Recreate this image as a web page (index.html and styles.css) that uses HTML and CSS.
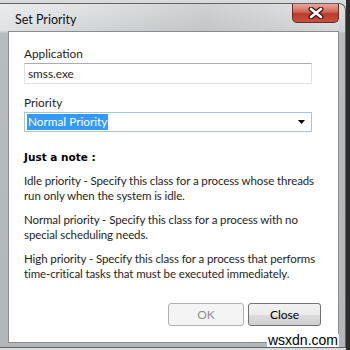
FILE: index.html
```html
<!DOCTYPE html>
<html lang="en">
<head>
  <meta charset="UTF-8" />
  <title>Set Priority</title>
  <link rel="stylesheet" href="styles.css">
</head>
<body>
  <div class="window">
    <div class="titlebar">
      <span class="title">Set Priority</span>
      <button class="close-x" aria-label="Close">
        <svg width="16" height="12" viewBox="0 0 16 12">
          <path d="M3 2 L13 10 M13 2 L3 10" stroke="#3a1a14" stroke-width="5" stroke-linecap="round" />
          <path d="M3 2 L13 10 M13 2 L3 10" stroke="#fff" stroke-width="2.6" stroke-linecap="round" />
        </svg>
      </button>
    </div>

    <div class="client">
      <div class="form">
        <div class="field-label">Application</div>
        <div class="textbox">smss.exe</div>

        <div class="field-label priority-label">Priority</div>
        <div class="combo">
          <span class="selected">Normal Priority</span>
          <svg class="arrow" width="7" height="4" viewBox="0 0 7 4"><path d="M0 0 H7 L3.5 4 Z" fill="#000" /></svg>
        </div>

        <div class="note-title">Just a note :</div>
        <p class="note">Idle priority - Specify this class for a process whose threads<br>run only when the system is idle.</p>
        <p class="note">Normal priority - Specify this class for a process with no<br>special scheduling needs.</p>
        <p class="note">High priority - Specify this class for a process that performs<br>time-critical tasks that must be executed immediately.</p>
      </div>

      <div class="buttons">
        <button class="btn btn-ok" disabled>OK</button>
        <button class="btn btn-close">Close</button>
      </div>
    </div>

    <div class="watermark">wsxdn.com</div>
  </div>
</body>
</html>
```

FILE: styles.css
```css
*, *::before, *::after { box-sizing: border-box; }

html, body {
  margin: 0;
  width: 350px;
  height: 350px;
  overflow: hidden;
}

body {
  font-family: Lato, "Noto Sans", sans-serif;
  font-size: 11.8px;
  color: #1e1e1e;
  background: linear-gradient(to right, #d9dadc 0, #d9dadc 346px, #2c2c2c 346px);
}

.window {
  position: relative;
  width: 346px;
  height: 345px;
  margin-top: 3px;
  display: flex;
  flex-direction: column;
  padding: 0 6px 4px 8px;
  border: 1px solid #5d6266;
  border-left: none;
  border-radius: 0 7px 0 0;
  background: linear-gradient(to bottom, #dfe1e3 0, #cfd2d5 28px, #b9bcbf 29px, #b4b7ba 100%);
}

.titlebar {
  height: 27px;
  display: flex;
  justify-content: space-between;
  align-items: flex-start;
  margin-left: -8px;
  background: linear-gradient(to right, rgba(255,255,255,0.35), rgba(255,255,255,0) 30%, rgba(120,120,120,0.15) 60%, rgba(255,255,255,0.1));
}

.title {
  padding: 8px 0 0 15px;
  font-size: 12.5px;
  color: #111;
}

.close-x {
  width: 47px;
  height: 19px;
  padding: 0;
  border: 1px solid #6d2b20;
  border-top: none;
  border-radius: 0 0 5px 5px;
  background: linear-gradient(to bottom, #e5a89c 0, #d2705f 40%, #b93d2a 55%, #c9503c 100%);
  display: flex;
  align-items: center;
  justify-content: center;
}

.client {
  flex: 1;
  display: flex;
  flex-direction: column;
  background: #fff;
  border: 1px solid #8a8d90;
}

.form {
  padding: 14px 26px 0 15px;
}

.field-label {
  line-height: 15px;
}

.priority-label {
  margin-top: 11px;
}

.textbox, .combo {
  height: 21px;
  margin-top: 2px;
  border: 1px solid #dde2e8;
  border-top-color: #abadb3;
  display: flex;
  align-items: center;
  padding-left: 3px;
}

.combo {
  height: 20px;
  padding-left: 2px;
  border-color: #a9c3dd;
  justify-content: space-between;
  padding-right: 6px;
}

.selected {
  background: #3399ff;
  color: #fff;
  line-height: 16px;
  padding: 0 1px;
}

.note-title {
  margin-top: 18px;
  font-family: "DejaVu Sans", sans-serif;
  font-weight: bold;
  font-size: 10.5px;
  line-height: 15px;
  color: #000;
}

.note {
  margin: 8px -12px 0 0;
  font-size: 11.5px;
  letter-spacing: -0.1px;
  line-height: 15px;
  white-space: nowrap;
}

.note + .note {
  margin-top: 9px;
}

.buttons {
  margin-top: auto;
  display: flex;
  justify-content: flex-end;
  gap: 4px;
  padding: 0 17px 16px 0;
}

.btn {
  height: 23px;
  font-family: inherit;
  font-size: 12px;
  border-radius: 3px;
  padding: 0;
}

.btn-ok {
  width: 76px;
  border: 1px solid #adb2b5;
  background: #f4f4f4;
  color: #8d8d8d;
}

.btn-close {
  width: 73px;
  border: 1px solid #707070;
  color: #000;
  background: linear-gradient(to bottom, #f2f2f2 0, #ebebeb 50%, #dddddd 51%, #cfcfcf 100%);
}

.watermark {
  position: absolute;
  right: 6px;
  bottom: 0;
  padding: 0 1px;
  background: #fff;
  font-family: "Liberation Sans", Arial, sans-serif;
  font-size: 14px;
  line-height: 13px;
  color: #000;
}
```
